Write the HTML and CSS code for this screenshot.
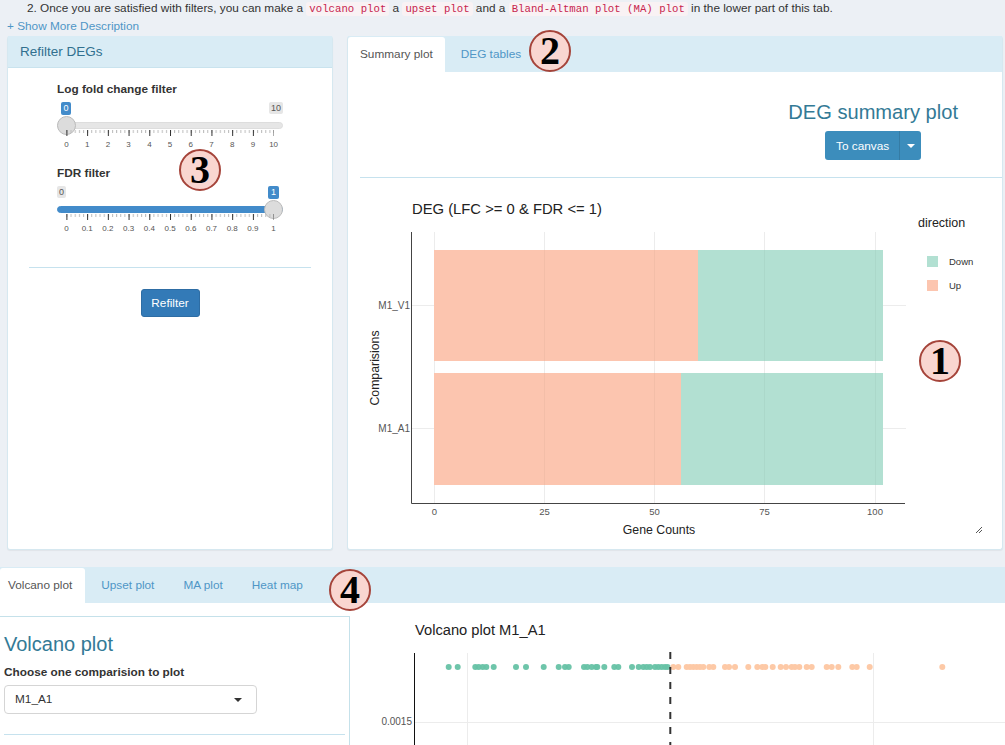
FILE: index.html
```html
<!DOCTYPE html>
<html lang="en">
<head>
<meta charset="utf-8">
<title>DEG</title>
<link rel="stylesheet" href="styles.css">
</head>
<body>
<div class="intro">
  <p class="intro-line">2. Once you are satisfied with filters, you can make a <code>volcano plot</code> a <code>upset plot</code> and a <code>Bland-Altman plot (MA) plot</code> in the lower part of this tab.</p>
  <a class="more">+ Show More Description</a>
</div>

<div class="top-row">
  <section class="card filter-card">
    <h3 class="card-head">Refilter DEGs</h3>
    <div class="field">
      <label class="field-label">Log fold change filter</label>
      <div class="slider">
        <span class="bubble bubble-on first-on">0</span>
        <span class="bubble bubble-off last-off">10</span>
        <div class="track"></div>
        <div class="handle handle-start"></div>
        <svg class="ticks" width="226" height="24" viewBox="57 129 226 24">
          <defs>
            <pattern id="major" x="66.4" y="0" width="20.72" height="24" patternUnits="userSpaceOnUse"><rect width="1" height="24" fill="#333"/></pattern>
            <pattern id="minor" x="66.4" y="0" width="4.144" height="24" patternUnits="userSpaceOnUse"><rect width="1" height="24" fill="#bbb"/></pattern>
          </defs>
          <rect x="66" y="130" width="208" height="3" fill="url(#minor)"/>
          <rect x="66" y="130" width="208" height="6" fill="url(#major)"/>
          <g class="tick-text">
            <text x="66.5" y="147">0</text><text x="87.2" y="147">1</text><text x="107.9" y="147">2</text><text x="128.6" y="147">3</text><text x="149.4" y="147">4</text><text x="170.1" y="147">5</text><text x="190.8" y="147">6</text><text x="211.5" y="147">7</text><text x="232.2" y="147">8</text><text x="252.9" y="147">9</text><text x="273.6" y="147">10</text>
          </g>
        </svg>
      </div>
    </div>
    <div class="field">
      <label class="field-label">FDR filter</label>
      <div class="slider">
        <span class="bubble bubble-off first-off">0</span>
        <span class="bubble bubble-on last-on">1</span>
        <div class="track track-full"></div>
        <div class="handle handle-end"></div>
        <svg class="ticks" width="226" height="24" viewBox="57 129 226 24">
          <rect x="66" y="130" width="208" height="3" fill="url(#minor)"/>
          <rect x="66" y="130" width="208" height="6" fill="url(#major)"/>
          <g class="tick-text">
            <text x="66.5" y="147">0</text><text x="87.2" y="147">0.1</text><text x="107.9" y="147">0.2</text><text x="128.6" y="147">0.3</text><text x="149.4" y="147">0.4</text><text x="170.1" y="147">0.5</text><text x="190.8" y="147">0.6</text><text x="211.5" y="147">0.7</text><text x="232.2" y="147">0.8</text><text x="252.9" y="147">0.9</text><text x="273.6" y="147">1</text>
          </g>
        </svg>
      </div>
    </div>
    <hr class="rule filter-rule">
    <div class="center"><button class="btn-primary">Refilter</button></div>
  </section>

  <section class="card plot-card">
    <nav class="tabs">
      <a class="tab tab-active">Summary plot</a>
      <a class="tab tab-next">DEG tables</a>
    </nav>
    <div class="summary-head">
      <div class="summary-inner">
        <h2 class="title summary-title">DEG summary plot</h2>
        <div class="btn-group"><button class="btn-canvas">To canvas</button><button class="btn-caret"><span class="caret"></span></button></div>
      </div>
    </div>
    <hr class="rule summary-rule">
    <svg class="chart" width="656" height="358" viewBox="348 190 656 358">
      <text class="c-title" x="412" y="214">DEG (LFC &gt;= 0 &amp; FDR &lt;= 1)</text>
      <path class="grid-line" d="M434.5 232V503M544.5 232V503M654.5 232V503M764.5 232V503M875.5 232V503M412 305.5H906M412 428.5H906"/>
      <rect x="434" y="250" width="264" height="111" fill="#fcc5af"/>
      <rect x="698" y="250" width="185" height="111" fill="#b2e0d2"/>
      <rect x="434" y="373" width="247" height="112" fill="#fcc5af"/>
      <rect x="681" y="373" width="202" height="112" fill="#b2e0d2"/>
      <path class="grid-soft" d="M544.5 250V361M654.5 250V361M764.5 250V361M875.5 250V361M544.5 373V485M654.5 373V485M764.5 373V485M875.5 373V485"/>
      <path class="axis" d="M411.5 232V503.5H905"/>
      <g class="c-tick">
        <text x="434.5" y="515">0</text><text x="544.5" y="515">25</text><text x="654.5" y="515">50</text><text x="764.5" y="515">75</text><text x="875" y="515">100</text>
      </g>
      <text class="c-ylabel" x="410" y="309">M1_V1</text>
      <text class="c-ylabel" x="410" y="432">M1_A1</text>
      <text class="c-axis" x="659" y="534">Gene Counts</text>
      <text class="c-axis" transform="translate(379 368) rotate(-90)">Comparisions</text>
      <text class="c-legend-title" x="918" y="227">direction</text>
      <rect x="927" y="256" width="11" height="11" fill="#b2e0d2"/>
      <rect x="927" y="280" width="11" height="11" fill="#fcc5af"/>
      <text class="c-legend" x="949" y="265">Down</text>
      <text class="c-legend" x="949" y="289">Up</text>
      <path class="resize" d="M976 533L982 527M979 533L982 530"/>
    </svg>
  </section>
</div>

<section class="lower">
  <nav class="tabs">
    <a class="tab tab-active tab-lower">Volcano plot</a>
    <a class="tab tab-next">Upset plot</a>
    <a class="tab">MA plot</a>
    <a class="tab">Heat map</a>
  </nav>
  <div class="lower-row">
    <aside class="side">
      <h2 class="title side-title">Volcano plot</h2>
      <label class="field-label side-label">Choose one comparision to plot</label>
      <div class="select">M1_A1<span class="caret caret-dark"></span></div>
      <hr class="rule side-rule">
    </aside>
    <svg class="chart" width="655" height="129" viewBox="350 616 655 129">
      <text class="v-title" x="415" y="635">Volcano plot M1_A1</text>
      <path class="grid-line" d="M467.5 653V745M873.5 653V745M415 722.5H1005"/>
      <path class="v-axis" d="M414.5 653V745"/>
      <text class="c-ylabel" x="412" y="725">0.0015</text>
      <g fill="#66c2a5" fill-opacity=".95">
        <circle cx="448.7" cy="667" r="3"/><circle cx="457.7" cy="667" r="3"/><circle cx="475.3" cy="667" r="3"/><circle cx="478.7" cy="667" r="3"/><circle cx="482.7" cy="667" r="3"/><circle cx="486.3" cy="667" r="3"/><circle cx="493.7" cy="667" r="3"/><circle cx="516" cy="667" r="3"/><circle cx="526" cy="667" r="3"/><circle cx="543.7" cy="667" r="3"/><circle cx="558.7" cy="667" r="3"/><circle cx="565" cy="667" r="3"/><circle cx="568.7" cy="667" r="3"/><circle cx="584" cy="667" r="3"/><circle cx="587.3" cy="667" r="3"/><circle cx="591.7" cy="667" r="3"/><circle cx="596" cy="667" r="3"/><circle cx="597.3" cy="667" r="3"/><circle cx="604.3" cy="667" r="3"/><circle cx="614.3" cy="667" r="3"/><circle cx="618.3" cy="667" r="3"/><circle cx="632" cy="667" r="3"/><circle cx="638.7" cy="667" r="3"/><circle cx="643.3" cy="667" r="3"/><circle cx="646.7" cy="667" r="3"/><circle cx="650" cy="667" r="3"/><circle cx="655" cy="667" r="3"/><circle cx="658.3" cy="667" r="3"/><circle cx="661.7" cy="667" r="3"/><circle cx="665" cy="667" r="3"/><circle cx="667.5" cy="667" r="3"/>
      </g>
      <g fill="#fdc9a6">
        <circle cx="673.3" cy="667" r="3"/><circle cx="678.3" cy="667" r="3"/><circle cx="686.7" cy="667" r="3"/><circle cx="690" cy="667" r="3"/><circle cx="693.3" cy="667" r="3"/><circle cx="696.7" cy="667" r="3"/><circle cx="700" cy="667" r="3"/><circle cx="703.3" cy="667" r="3"/><circle cx="709.3" cy="667" r="3"/><circle cx="713.3" cy="667" r="3"/><circle cx="725" cy="667" r="3"/><circle cx="729" cy="667" r="3"/><circle cx="735" cy="667" r="3"/><circle cx="748.3" cy="667" r="3"/><circle cx="757.3" cy="667" r="3"/><circle cx="762.3" cy="667" r="3"/><circle cx="765.3" cy="667" r="3"/><circle cx="772.7" cy="667" r="3"/><circle cx="780.7" cy="667" r="3"/><circle cx="786" cy="667" r="3"/><circle cx="791.7" cy="667" r="3"/><circle cx="795" cy="667" r="3"/><circle cx="799.3" cy="667" r="3"/><circle cx="806.7" cy="667" r="3"/><circle cx="811.7" cy="667" r="3"/><circle cx="826.7" cy="667" r="3"/><circle cx="831.7" cy="667" r="3"/><circle cx="838.3" cy="667" r="3"/><circle cx="852.3" cy="667" r="3"/><circle cx="856.7" cy="667" r="3"/><circle cx="869.7" cy="667" r="3"/><circle cx="942.3" cy="667" r="3"/>
      </g>
      <path class="v-dash" d="M670.3 652V745"/>
    </svg>
  </div>
</section>

<span class="badge badge-1">1</span>
<span class="badge badge-2">2</span>
<span class="badge badge-3">3</span>
<span class="badge badge-4">4</span>
</body>
</html>
```

FILE: styles.css
```css
* { box-sizing: border-box; }
html, body { margin: 0; height: 745px; overflow: hidden; }
body {
  position: relative;
  background: #ecf0f5;
  color: #333;
  font-family: "Liberation Sans", Arial, sans-serif;
  font-size: 11.8px;
  line-height: 1.2;
}
.intro { height: 36px; padding-left: 7px; }
.intro-line { margin: 0; padding: 1px 0 0 20px; height: 19px; line-height: 14px; white-space: nowrap; }
.intro-line code {
  font-family: "Liberation Mono", monospace;
  font-size: 10.7px;
  color: #c7254e;
  background: #f9f2f4;
  padding: 1px 3px;
  border-radius: 3px;
}
.more { display: block; height: 15px; line-height: 15px; color: #4f96c6; }

.top-row { display: flex; gap: 14px; padding-left: 7px; height: 514px; }
.card {
  background: #fff;
  border: 1px solid #d6e8f0;
  border-top: 0;
  border-radius: 3px;
  box-shadow: 0 1px 1px rgba(0, 0, 0, .05);
}
.filter-card { width: 326px; flex: none; }
.plot-card { width: 656px; flex: none; }
.card-head {
  margin: 0;
  height: 32px;
  padding: 0 12px;
  line-height: 31px;
  font-size: 13.5px;
  font-weight: 400;
  color: #31708f;
  background: #d9ecf5;
  border-bottom: 1px solid #c9e3ee;
}
.field { height: 84px; padding-left: 49px; }
.filter-card .field:first-of-type { margin-top: 14px; }
.field-label { display: block; height: 15px; line-height: 15px; font-weight: 700; }
.slider { position: relative; width: 226px; height: 69px; }
.track {
  position: absolute;
  left: 0; right: 0; top: 25px;
  height: 7px;
  border-radius: 4px;
  background: #e6e6e6;
  border: 1px solid #ddd;
}
.track-full { background: #428bca; border-color: #428bca; }
.handle {
  position: absolute;
  top: 19px;
  width: 19px; height: 19px;
  border-radius: 50%;
  background: #dcdcdc;
  border: 1px solid #bbb;
}
.handle-start { left: 0; }
.handle-end { left: 207px; }
.bubble {
  position: absolute;
  top: 5px;
  height: 12px;
  padding: 0 2px;
  line-height: 12px;
  font-size: 9px;
  border-radius: 2px;
  text-align: center;
}
.bubble-on { background: #428bca; color: #fff; top: 5px; height: 13px; line-height: 13px; }
.bubble-off { background: #e6e6e6; color: #555; top: 5px; }
.first-on { left: 4px; width: 10px; }
.last-off { right: 0; width: 14px; }
.first-off { left: 0; width: 9px; }
.last-on { right: 4px; width: 11px; }
.ticks { position: absolute; left: 0; top: 32px; }
.tick-text text { font-size: 8px; fill: #555; text-anchor: middle; }

.rule { border: 0; height: 1px; margin: 0; background: #c6e2ee; }
.filter-rule { margin: 17px 21px 21px; }
.center { text-align: center; }
.btn-primary {
  height: 28px;
  width: 59px;
  padding: 0;
  border: 1px solid #2e6da4;
  border-radius: 3px;
  background: #337ab7;
  color: #fff;
  font: 11.8px "Liberation Sans", Arial, sans-serif;
}

.tabs { display: flex; height: 36px; padding-top: 1px; background: #d9ecf5; }
.tab { padding: 0 14.5px; height: 35px; line-height: 35px; color: #4f96c6; white-space: nowrap; }
.tab-active { background: #fff; color: #555; border-radius: 3px 3px 0 0; padding: 0 12px; }
.tab-next { margin-left: 1.5px; }
.tab-lower { padding: 0 13px 0 8px; }

.summary-head { display: flex; justify-content: flex-end; padding: 28px 44px 0 0; }
.summary-inner { text-align: center; }
.title { margin: 0; font-weight: 400; color: #337a96; font-size: 20px; line-height: 24px; }
.summary-title { font-size: 20.1px; }
.btn-group { display: inline-flex; margin-top: 7px; }
.btn-canvas, .btn-caret {
  height: 29px;
  border: 0;
  background: #3c8dbc;
  color: #fff;
  font: 11.8px "Liberation Sans", Arial, sans-serif;
  padding: 0;
}
.btn-canvas { width: 74px; padding-left: 1px; border-radius: 3px 0 0 3px; }
.btn-caret { width: 22px; border-left: 1px solid #357ca5; border-radius: 0 3px 3px 0; display: flex; align-items: center; justify-content: center; }
.caret { display: inline-block; border-top: 4px solid #fff; border-left: 4px solid transparent; border-right: 4px solid transparent; }
.summary-rule { margin: 17px 0 12px 12px; }
.chart { display: block; flex: none; }
.grid-soft { stroke: rgba(0, 0, 0, .035); stroke-width: 1; fill: none; }
.grid-line { stroke: #ececec; stroke-width: 1; fill: none; }
.axis { stroke: #444; stroke-width: 1; fill: none; }
.c-title { font-size: 14.8px; fill: #222; }
.c-tick text { font-size: 9.5px; fill: #555; text-anchor: middle; }
.c-ylabel { font-size: 10px; fill: #555; text-anchor: end; }
.c-axis { font-size: 12.3px; fill: #222; text-anchor: middle; }
.c-legend-title { font-size: 12.5px; fill: #222; }
.c-legend { font-size: 9.5px; fill: #333; }
.resize { stroke: #555; stroke-width: 1; fill: none; }

.lower { margin-top: 17px; }
.lower-row { display: flex; margin-top: 13px; background: #fff; height: 130px; overflow: hidden; box-shadow: 0 -13px 0 #fff; }
.side { width: 350px; flex: none; padding: 0 4px; border-top: 1px solid #c5e1ea; border-right: 1px solid #c5e1ea; }
.side-title { font-size: 20px; margin-top: 15px; }
.side-label { margin-top: 9px; }
.select {
  display: flex;
  justify-content: space-between;
  align-items: center;
  width: 253px;
  height: 29px;
  margin-top: 5px;
  padding: 0 14px 0 10px;
  background: #fff;
  border: 1px solid #d5d5d5;
  border-radius: 4px;
  font-size: 11.8px;
  color: #333;
}
.caret-dark { border-top-color: #333; }
.side-rule { margin: 20px 0 0; }
.v-title { font-size: 14.7px; fill: #222; }
.v-axis { stroke: #111; stroke-width: 1; fill: none; }
.v-dash { stroke: #333; stroke-width: 2; stroke-dasharray: 7 8; fill: none; }

.badge {
  position: absolute;
  width: 42px; height: 42px;
  border-radius: 50%;
  border: 2px solid #a5443a;
  background: #f9d6d0;
  color: #000;
  font-family: "Liberation Serif", "DejaVu Serif", serif;
  font-weight: 700;
  font-size: 40px;
  line-height: 38px;
  text-align: center;
}
.badge-1 { left: 919px; top: 340px; }
.badge-2 { left: 529px; top: 30px; }
.badge-3 { left: 179px; top: 149px; }
.badge-4 { left: 329px; top: 569px; }
```
